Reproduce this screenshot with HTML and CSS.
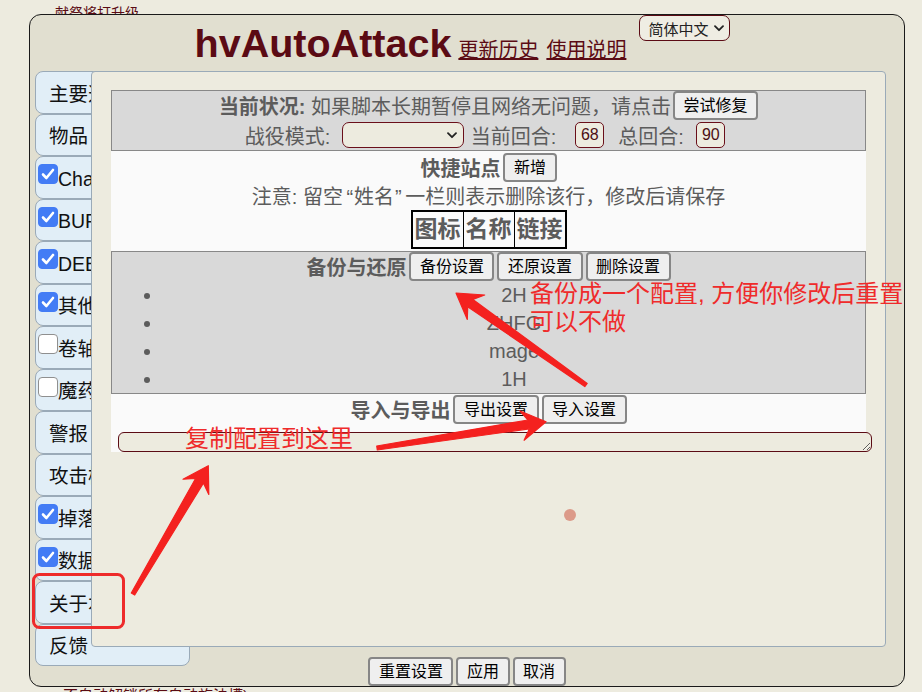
FILE: index.html
```html
<!DOCTYPE html>
<html lang="zh-CN">
<head>
<meta charset="utf-8">
<title>hvAutoAttack</title>
<link rel="stylesheet" href="styles.css">
</head>
<body>
<div class="page">
  <div class="bg-top">献祭将打升级</div>
  <div class="bg-bottom">不自动解锁所有自动施法槽)</div>
</div>

<div class="panel">
  <div class="header">
    <h1 class="title">hvAutoAttack</h1>
    <a class="link" href="#">更新历史</a>
    <a class="link" href="#">使用说明</a>
    <div class="lang">简体中文<svg class="chev" width="10" height="7" viewBox="0 0 10 7"><path d="M1 1.2 L5 5.2 L9 1.2" fill="none" stroke="#222" stroke-width="1.8" stroke-linecap="round" stroke-linejoin="round"/></svg></div>
  </div>

  <div class="body-row">
    <div class="tabs">
      <div class="tab">主要选项</div>
      <div class="tab">物品</div>
      <div class="tab cb"><span class="check on"><svg width="14" height="12" viewBox="0 0 14 12"><path d="M2 6.5 L5.4 10 L12 2" fill="none" stroke="#fff" stroke-width="2.6" stroke-linecap="round" stroke-linejoin="round"/></svg></span>Channel技能</div>
      <div class="tab cb"><span class="check on"><svg width="14" height="12" viewBox="0 0 14 12"><path d="M2 6.5 L5.4 10 L12 2" fill="none" stroke="#fff" stroke-width="2.6" stroke-linecap="round" stroke-linejoin="round"/></svg></span>BUFF技能</div>
      <div class="tab cb"><span class="check on"><svg width="14" height="12" viewBox="0 0 14 12"><path d="M2 6.5 L5.4 10 L12 2" fill="none" stroke="#fff" stroke-width="2.6" stroke-linecap="round" stroke-linejoin="round"/></svg></span>DEBUFF技能</div>
      <div class="tab cb"><span class="check on"><svg width="14" height="12" viewBox="0 0 14 12"><path d="M2 6.5 L5.4 10 L12 2" fill="none" stroke="#fff" stroke-width="2.6" stroke-linecap="round" stroke-linejoin="round"/></svg></span>其他技能</div>
      <div class="tab cb"><span class="check"></span>卷轴</div>
      <div class="tab cb"><span class="check"></span>魔药</div>
      <div class="tab">警报</div>
      <div class="tab">攻击模式</div>
      <div class="tab cb"><span class="check on"><svg width="14" height="12" viewBox="0 0 14 12"><path d="M2 6.5 L5.4 10 L12 2" fill="none" stroke="#fff" stroke-width="2.6" stroke-linecap="round" stroke-linejoin="round"/></svg></span>掉落监测</div>
      <div class="tab cb"><span class="check on"><svg width="14" height="12" viewBox="0 0 14 12"><path d="M2 6.5 L5.4 10 L12 2" fill="none" stroke="#fff" stroke-width="2.6" stroke-linecap="round" stroke-linejoin="round"/></svg></span>数据记录</div>
      <div class="tab">关于本脚本</div>
      <div class="tab">反馈</div>
    </div>

    <div class="content">
      <div class="sec gray s1">
        <div class="row"><span><b>当前状况:</b> 如果脚本长期暂停且网络无问题，请点击</span><button class="btn">尝试修复</button></div>
        <div class="row row-status">
          <span>战役模式:</span>
          <div class="sel"><svg class="chev" width="10" height="7" viewBox="0 0 10 7"><path d="M1 1.2 L5 5.2 L9 1.2" fill="none" stroke="#222" stroke-width="1.8" stroke-linecap="round" stroke-linejoin="round"/></svg></div>
          <span class="lbl-a">当前回合:</span>
          <div class="num num-a">68</div>
          <span class="lbl-b">总回合:</span>
          <div class="num num-b">90</div>
        </div>
      </div>

      <div class="sec light s2">
        <div class="row"><span><b>快捷站点</b></span><button class="btn">新增</button></div>
        <div class="row note-row"><span>注意: 留空<span class="q-open">“</span>姓名<span class="q-close">”</span>一栏则表示删除该行，修改后请保存</span></div>
        <table class="sites">
          <tr><th>图标</th><th>名称</th><th>链接</th></tr>
        </table>
      </div>

      <div class="sec gray s3">
        <div class="row"><span><b>备份与还原</b></span><button class="btn">备份设置</button><button class="btn">还原设置</button><button class="btn">删除设置</button></div>
        <ul class="backups">
          <li>2H</li>
          <li>ZHFG</li>
          <li>mage</li>
          <li>1H</li>
        </ul>
      </div>

      <div class="sec light s4">
        <div class="row"><span><b>导入与导出</b></span><button class="btn">导出设置</button><button class="btn">导入设置</button></div>
        <textarea class="config"></textarea>
      </div>
    </div>
  </div>

  <div class="footer">
    <button class="btn">重置设置</button>
    <button class="btn">应用</button>
    <button class="btn">取消</button>
  </div>
</div>

<svg class="marks" width="922" height="692" viewBox="0 0 922 692">
  <polygon class="arrow" points="587.2,383.4 472.9,299.4 484.7,295.0 456,293 467.3,319.4 467.7,306.8 584.8,386.6"/>
  <polygon class="arrow" points="377.3,450.0 529.4,428.8 524.1,440.3 546,421.7 519.5,410.7 528.0,420.0 376.7,446.0"/>
  <polygon class="arrow" points="134.7,595.0 203.4,483.1 208.8,494.4 208.3,465.7 183.0,479.2 195.6,478.5 131.3,593.0"/>
  <rect class="box" x="33.5" y="574.5" width="90" height="53" rx="6"/>
  <circle class="dot" cx="570" cy="515" r="6"/>
</svg>
<div class="note note-a">备份成一个配置, 方便你修改后重置<br>可以不做</div>
<div class="note note-b">复制配置到这里</div>
</body>
</html>
```

FILE: styles.css
```css
* { box-sizing: border-box; }

body {
  margin: 0;
  width: 922px;
  height: 692px;
  overflow: hidden;
  position: relative;
  background: #EDEBDF;
  font-family: "Liberation Sans", "Noto Sans CJK SC", sans-serif;
}

.page {
  height: 692px;
  display: flex;
  flex-direction: column;
  color: #5B0B14;
}
.bg-top {
  margin: 3px 0 0 55px;
  font-size: 14px;
  line-height: 20px;
}
.bg-bottom {
  margin: auto 0 -14px 63px;
  font-size: 15px;
  line-height: 20px;
}

.panel {
  position: absolute;
  left: 29px;
  top: 14px;
  width: 876px;
  height: 673px;
  border: 1px solid #1a1a1a;
  border-radius: 12px;
  background: #E1DFD0;
}

.header {
  height: 56px;
  display: flex;
  justify-content: center;
  align-items: baseline;
  padding-right: 9px;
}
.title {
  margin: 9px 0 0;
  font-size: 39.5px;
  line-height: 39px;
  font-weight: bold;
  color: #5B0B14;
}
.link {
  margin-left: 7px;
  font-size: 20px;
  color: #5B0B14;
  text-decoration: underline;
}
.link + .link { margin-left: 8px; }
.lang {
  align-self: flex-start;
  margin-left: 13px;
  width: 91px;
  height: 26px;
  border: 1px solid #5B0B14;
  border-radius: 7px;
  background: #EFEDE3;
  display: flex;
  align-items: center;
  padding-left: 8px;
  font-size: 15px;
  color: #222;
}
.chev { margin-left: auto; margin-right: 5px; flex: none; }

.body-row {
  display: flex;
  height: 576px;
}
.tabs {
  flex: none;
  width: 155px;
  margin-left: 5px;
  display: flex;
  flex-direction: column;
}
.tab {
  flex: none;
  height: 42.5px;
  border: 1px solid #9AAAB8;
  border-radius: 8px;
  background: #E1EEF7;
  display: flex;
  align-items: center;
  padding-left: 13px;
  font-size: 19.5px;
  color: #111;
  white-space: nowrap;
  overflow: hidden;
}
.tab.cb { padding-left: 2px; }
.check {
  flex: none;
  align-self: flex-start;
  margin-top: 7px;
  width: 20px;
  height: 20px;
  border-radius: 4px;
  background: #fff;
  border: 1px solid #8f8f8f;
  display: flex;
  align-items: center;
  justify-content: center;
}
.check.on {
  background: #437CF5;
  border-color: #437CF5;
}

.content {
  flex: none;
  width: 795px;
  height: 576px;
  margin-left: -99px;
  position: relative;
  z-index: 1;
  background: #EDEBDF;
  border: 1px solid #9AAAB8;
  border-radius: 4px;
  padding: 18px 19px;
}

.sec {
  text-align: center;
  color: #5c5c5c;
  font-size: 20px;
}
.sec.gray {
  background: #D9D9D9;
  border: 1px solid #888;
}
.sec.light { background: #FAFAFA; }

.row {
  display: flex;
  justify-content: center;
  align-items: center;
  height: 29px;
  white-space: nowrap;
}
.s1 .row { height: 29.5px; }
.s1 .row-status { padding-right: 7px; }

.btn {
  font-family: "Liberation Sans", "Noto Sans CJK SC", sans-serif;
  font-size: 16px;
  line-height: 25px;
  height: 29px;
  padding: 0 8.5px;
  margin: 0 0 0 3px;
  color: #000;
  background: #EFEFEF;
  border: 2px solid #868686;
  border-radius: 4px;
}
.s1 .btn { margin-left: 2px; }

.sel {
  margin-left: 11.5px;
  width: 122px;
  height: 26px;
  border: 1px solid #6A0F1A;
  border-radius: 7px;
  background: #EDEBDF;
  display: flex;
  align-items: center;
}
.sel .chev { margin-right: 6px; }
.lbl-a { margin-left: 7px; }
.lbl-b { margin-left: 14px; }
.num {
  width: 29px;
  height: 26px;
  border: 1px solid #6A0F1A;
  border-radius: 5px;
  background: #EDEBDF;
  font-size: 16px;
  line-height: 24px;
  color: #4B0F14;
  text-align: center;
}
.num-a { margin-left: 19px; }
.num-b { margin-left: 12.5px; }

.s2 { padding: 1.5px 0 2.5px; }
.note-row { height: 28px; }
.q-open { padding: 0 1px 0 3.5px; }
.q-close { padding: 0 3.5px 0 1px; }
.sites {
  margin: 0 auto;
  border-collapse: collapse;
  border: 2px solid #000;
}
.sites th {
  border: 1px solid #000;
  padding: 0 2px;
  font-size: 23px;
  line-height: 35px;
  font-weight: bold;
  color: #5c5c5c;
}

.backups {
  margin: 0;
  padding: 0 0 0 51px;
  list-style: disc;
}
.backups li {
  line-height: 28px;
  text-align: center;
}

.s4 { padding-top: 1px; }
.config {
  display: block;
  margin: 8px 0 6px 7px;
  width: 754px;
  height: 20px;
  border: 1px solid #5B0B14;
  border-radius: 6px;
  background: #EDEBDF;
  padding: 0;
  resize: both;
}

.footer {
  display: flex;
  justify-content: center;
  gap: 3px;
  margin-top: 10px;
}
.footer .btn { margin: 0; }

.marks {
  position: absolute;
  left: 0;
  top: 0;
  z-index: 5;
  pointer-events: none;
}
.arrow {
  fill: #F4211F;
  stroke: #F4211F;
  stroke-width: 1.2;
  stroke-linejoin: round;
}
.box {
  fill: none;
  stroke: #EE2B2B;
  stroke-width: 3;
}
.dot { fill: #DC9A89; }

.note {
  position: absolute;
  z-index: 6;
  color: #EF2B2B;
  font-size: 24px;
  line-height: 28px;
  white-space: nowrap;
}
.note-a { left: 530px; top: 280px; }
.note-b { left: 185px; top: 425px; }
```
